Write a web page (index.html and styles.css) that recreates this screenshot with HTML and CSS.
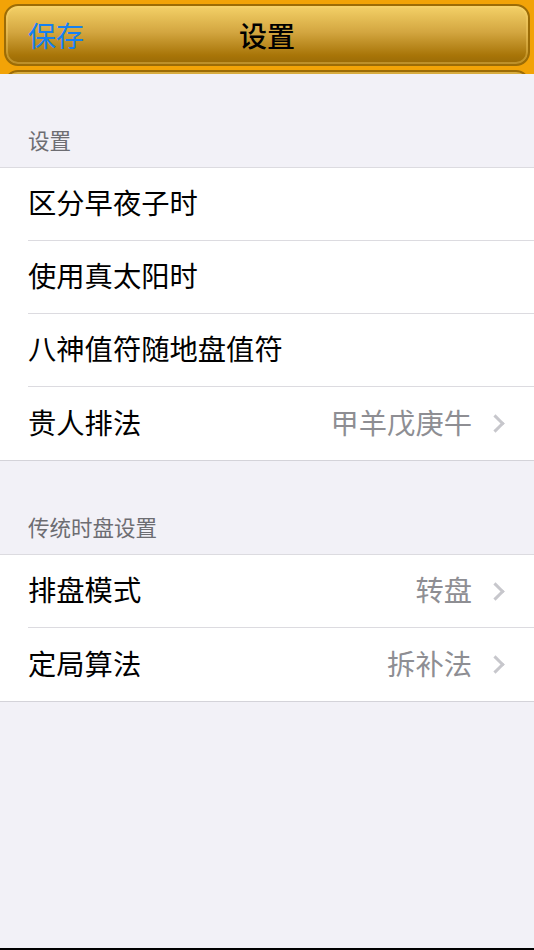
FILE: index.html
```html
<!DOCTYPE html>
<html>
<head>
    <title>设置</title>
    <meta charset="utf-8">
    <link rel="stylesheet" href="styles.css">
</head>
<body>
    <!-- top navigation bar -->
    <div class="nav">
        <div class="nav-bar">
            <span class="nav-save">保存</span>
            <span class="nav-title">设置</span>
        </div>
        <div class="nav-under"></div>
    </div>

    <div class="section-title">设置</div>
    <div class="group">
        <div class="row"><span class="label">区分早夜子时</span></div>
        <div class="row"><span class="label">使用真太阳时</span></div>
        <div class="row"><span class="label">八神值符随地盘值符</span></div>
        <div class="row">
            <span class="label">贵人排法</span>
            <span class="value">甲羊戊庚牛</span>
            <span class="chevron"></span>
        </div>
    </div>

    <div class="section-title">传统时盘设置</div>
    <div class="group">
        <div class="row">
            <span class="label">排盘模式</span>
            <span class="value">转盘</span>
            <span class="chevron"></span>
        </div>
        <div class="row">
            <span class="label">定局算法</span>
            <span class="value">拆补法</span>
            <span class="chevron"></span>
        </div>
    </div>

    <div class="bottom-line"></div>
</body>
</html>
```

FILE: styles.css
```css
html, body {
    height: 100%;
}

body {
    margin: 0;
    background: #f2f1f7;
    font-family: "Noto Sans CJK SC", "Noto Sans", sans-serif;
    color: #000;
    display: flex;
    flex-direction: column;
}

/* Gold toolbar */
.nav {
    background: #f2a307;
    padding: 4px 4px 0;
    height: 74px;
    box-sizing: border-box;
    flex: none;
    overflow: hidden;
}

.nav-bar {
    height: 62px;
    box-sizing: border-box;
    border: 2px solid #9c6c06;
    border-radius: 14px;
    box-shadow: inset 0 0 0 2px rgba(255, 214, 110, 0.35);
    background: linear-gradient(#f4d168, #d3a640 45%, #a87508 85%, #9a6a06);
    display: flex;
    align-items: center;
    position: relative;
    padding-left: 22px;
}

.nav-save {
    color: #1580f2;
    font-size: 28px;
}

.nav-title {
    position: absolute;
    left: 0;
    right: 0;
    text-align: center;
    font-size: 28px;
    font-weight: 500;
    pointer-events: none;
}

.nav-under {
    height: 14px;
    margin-top: 4px;
    border: 2px solid #9c6c06;
    border-radius: 14px 14px 0 0;
    background: #d9ad40;
}

/* Section headers */
.section-title {
    padding: 55px 28px 17px;
    font-size: 21.5px;
    line-height: 21px;
    color: #6d6d72;
    flex: none;
}

.group {
    background: #fff;
    border-top: 1px solid #dcdbe0;
    border-bottom: 1px solid #d4d3d9;
    flex: none;
}

.row {
    height: 72px;
    display: flex;
    align-items: center;
    margin-left: 28px;
    padding-right: 28px;
    border-bottom: 1px solid #dcdbe0;
}

.row:last-child {
    border-bottom: none;
    height: 73px;
}

.label {
    font-size: 28.3px;
    line-height: 1;
    flex: 1;
    margin-top: -3px;
}

.value {
    font-size: 28.3px;
    line-height: 1;
    color: #8e8e93;
    margin-right: 17px;
    margin-top: -3px;
}

.chevron {
    width: 10px;
    height: 10px;
    border-top: 3px solid #c7c7cc;
    border-right: 3px solid #c7c7cc;
    transform: rotate(45deg);
    margin-right: 4px;
}

.bottom-line {
    margin-top: auto;
    height: 2px;
    background: #000;
    flex: none;
}
```
